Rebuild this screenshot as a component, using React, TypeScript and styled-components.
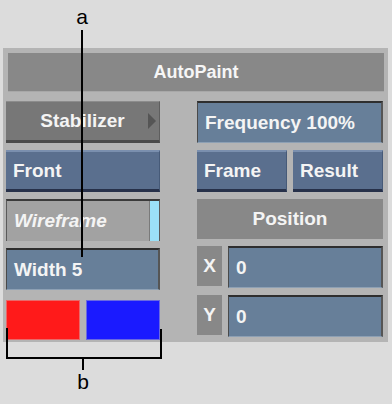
import styled, { createGlobalStyle } from 'styled-components'

const GlobalStyle = createGlobalStyle`
  html, body {
    margin: 0;
    background: #dcdcdc;
  }
  body {
    font-family: 'Liberation Sans', Arial, sans-serif;
  }
`

const Page = styled.div`
  position: relative;
  width: 392px;
  height: 404px;
  padding-top: 48px;
  box-sizing: border-box;
  overflow: hidden;
`

const Panel = styled.div`
  margin-left: 3px;
  width: 385px;
  height: 294px;
  background: #b4b4b4;
  padding: 5px 4px 0 3px;
  box-sizing: border-box;
  display: flex;
  flex-direction: column;
`

const TitleBar = styled.div`
  height: 39px;
  margin-left: 2px;
  background: #888888;
  border-bottom: 1px solid #a8a8a8;
  box-sizing: border-box;
  display: flex;
  align-items: center;
  justify-content: center;
  color: #f6f6f6;
  font-weight: 700;
  font-size: 18px;
`

const Columns = styled.div`
  margin-top: 9px;
  display: grid;
  grid-template-columns: 154px 186px;
  column-gap: 37px;
`

const Column = styled.div`
  display: flex;
  flex-direction: column;
  gap: 7px;
`

const Row = styled.div`
  display: flex;
  gap: 6px;
  height: 42px;

  && > * {
    flex: 1 1 0;
  }
`

const Control = styled.div`
  height: 42px;
  flex: none;
  box-sizing: border-box;
  display: flex;
  align-items: center;
  padding-left: 7px;
  color: #f4f4f4;
  font-weight: 700;
  font-size: 19px;
  white-space: nowrap;
`

const MenuButton = styled(Control)`
  position: relative;
  justify-content: center;
  padding-left: 0;
  background: #777777;
  border-top: 1px solid #8c8c8c;
  border-bottom: 3px solid #4a4a4a;
  border-right: 1px solid #5e5e5e;
`

const Arrow = styled.span`
  position: absolute;
  right: 3px;
  top: 11px;
  width: 0;
  height: 0;
  border-top: 8px solid transparent;
  border-bottom: 8px solid transparent;
  border-left: 8px solid #555555;
`

const BlueButton = styled(Control)`
  background: #5a6f8e;
  border-top: 2px solid #7a8fae;
  border-bottom: 3px solid #27314a;
  border-right: 1px solid #465a78;
`

const Field = styled(Control)`
  background: #677f99;
  border-top: 2px solid #2e2e2e;
  border-left: 1px solid #4a4a4a;
  border-right: 2px solid #555;
  border-bottom: 1px solid #8da0b4;
`

const Wireframe = styled(Control)`
  background: #a2a2a2;
  border-top: 2px solid #3a3a3a;
  border-left: 1px solid #5a5a5a;
  border-right: 1px solid #5a5a5a;
  font-style: italic;
  justify-content: space-between;
`

const Indicator = styled.span`
  width: 9px;
  height: 100%;
  background: #9be0f7;
  border-left: 1px solid #7a7a7a;
`

const Label = styled(Control)`
  background: #888888;
  justify-content: center;
  padding-left: 0;
  height: 40px;
`

const AxisLabel = styled(Label)`
  &&& {
    flex: 0 0 25px;
  }
`

const Swatch = styled.div<{ $color: string; $edge: string }>`
  height: 40px;
  margin-top: 3px;
  background: ${({ $color }) => $color};
  border: 1px solid ${({ $edge }) => $edge};
  box-sizing: border-box;
`

const Callout = styled.span<{ $x: number; $y: number }>`
  position: absolute;
  left: ${({ $x }) => $x}px;
  top: ${({ $y }) => $y}px;
  transform: translateX(-50%);
  font-family: 'Liberation Sans', Arial, sans-serif;
  font-size: 21px;
  line-height: 1;
  color: #000;
`

const Leaders = styled.svg`
  position: absolute;
  left: 0;
  top: 0;
  pointer-events: none;
`

export default function App() {
  return (
    <>
      <GlobalStyle />
      <Page>
        <Panel>
          <TitleBar>AutoPaint</TitleBar>
          <Columns>
            <Column>
              <MenuButton>
                Stabilizer
                <Arrow />
              </MenuButton>
              <BlueButton>Front</BlueButton>
              <Wireframe>
                Wireframe
                <Indicator />
              </Wireframe>
              <Field>Width 5</Field>
              <Row>
                <Swatch $color="#ff1a1a" $edge="#e86a6a" />
                <Swatch $color="#1a1aff" $edge="#6a6ae0" />
              </Row>
            </Column>
            <Column>
              <Field>Frequency 100%</Field>
              <Row>
                <BlueButton>Frame</BlueButton>
                <BlueButton>Result</BlueButton>
              </Row>
              <Label>Position</Label>
              <Row>
                <AxisLabel>X</AxisLabel>
                <Field>0</Field>
              </Row>
              <Row>
                <AxisLabel>Y</AxisLabel>
                <Field>0</Field>
              </Row>
            </Column>
          </Columns>
        </Panel>

        <Leaders width="392" height="404">
          <line x1="82" y1="30" x2="82" y2="257" stroke="#000" strokeWidth="2" />
          <polyline
            points="7,328 7,358 161,358 161,329"
            fill="none"
            stroke="#000"
            strokeWidth="2"
          />
          <line x1="83" y1="358" x2="83" y2="370" stroke="#000" strokeWidth="2" />
        </Leaders>
        <Callout $x={82} $y={6}>a</Callout>
        <Callout $x={83} $y={371}>b</Callout>
      </Page>
    </>
  )
}
